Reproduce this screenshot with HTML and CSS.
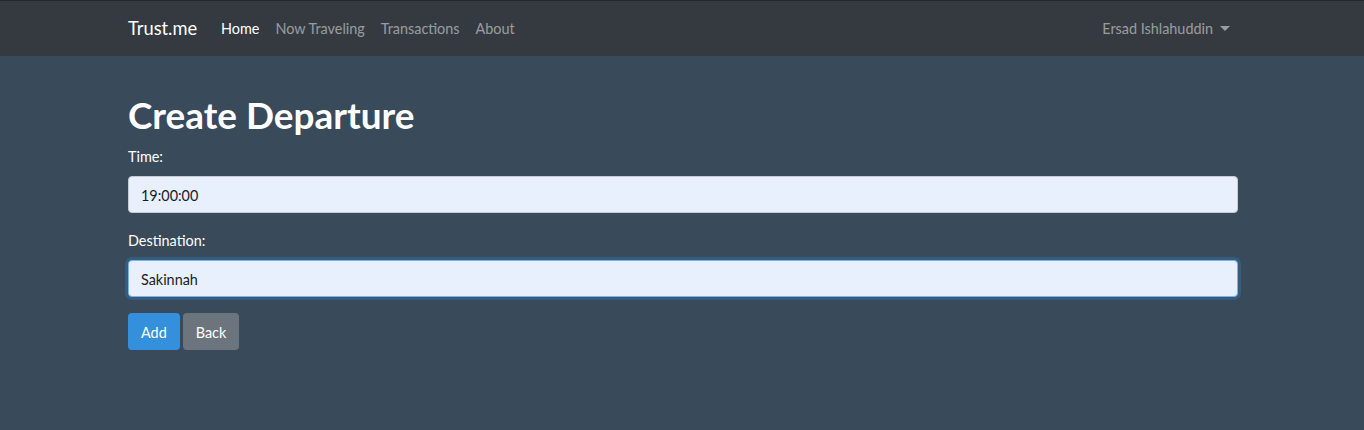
FILE: index.html
```html
<!DOCTYPE html>
<html lang="en">
<head>
<meta charset="utf-8">
<title>Create Departure</title>
<link rel="stylesheet" href="styles.css">
</head>
<body>
<nav class="navbar">
  <div class="container nav-inner">
    <a class="brand" href="#">Trust.me</a>
    <ul class="nav-links">
      <li><a class="nav-link active" href="#">Home</a></li>
      <li><a class="nav-link" href="#">Now Traveling</a></li>
      <li><a class="nav-link" href="#">Transactions</a></li>
      <li><a class="nav-link" href="#">About</a></li>
    </ul>
    <div class="nav-right">
      <a class="nav-link dropdown" href="#">Ersad Ishlahuddin<span class="caret"></span></a>
    </div>
  </div>
</nav>
<main class="container main">
  <h1 class="title">Create Departure</h1>
  <form class="form">
    <div class="form-group">
      <label class="label" for="time">Time:</label>
      <input class="input" id="time" type="text" value="19:00:00">
    </div>
    <div class="form-group">
      <label class="label" for="dest">Destination:</label>
      <input class="input focused" id="dest" type="text" value="Sakinnah">
    </div>
    <div class="actions">
      <button class="btn btn-primary" type="button">Add</button>
      <button class="btn btn-secondary" type="button">Back</button>
    </div>
  </form>
</main>
</body>
</html>
```
FILE: styles.css
```css
* { box-sizing: border-box; }
html, body {
  margin: 0;
  padding: 0;
}
body {
  font-family: Lato, "Open Sans", "Liberation Sans", sans-serif;
  font-size: 14.4px;
  line-height: 1.5;
  background: #394a5a;
  color: #fff;
  height: 430px;
}
.container {
  width: 1110px;
  margin-left: calc(50% - 554px);
}
.navbar {
  background: #343a40;
  border-top: 1px solid #24272b;
  height: 56px;
}
.nav-inner {
  display: flex;
  align-items: center;
  height: 55px;
  padding-top: 1px;
}
.brand {
  color: #fff;
  text-decoration: none;
  font-size: 18.3px;
  margin-right: 16px;
  line-height: 1.5;
}
.nav-links {
  display: flex;
  list-style: none;
  margin: 0;
  padding: 0;
}
.nav-link {
  display: block;
  padding: 8px 8px;
  color: rgba(255,255,255,0.5);
  text-decoration: none;
  font-size: 14.4px;
}
.nav-link.active { color: #fff; }
.nav-right {
  margin-left: auto;
}
.dropdown {
  display: flex;
  align-items: center;
}
.caret {
  display: inline-block;
  width: 0;
  height: 0;
  margin-left: 7px;
  border-top: 5px solid rgba(255,255,255,0.5);
  border-left: 5px solid transparent;
  border-right: 5px solid transparent;
}
.main {
  padding-top: 37px;
}
.title {
  font-size: 36.9px;
  font-weight: 700;
  line-height: 1.2;
  margin: 0 0 8px;
}
.form-group {
  margin-bottom: 16px;
}
.label {
  display: block;
  line-height: 23px;
  margin-bottom: 8px;
  font-size: 14.4px;
}
.input {
  display: block;
  width: 100%;
  height: 37px;
  padding: 7px 12px 5px;
  font-family: inherit;
  font-size: 14.4px;
  color: #1b1b22;
  background: #e8f0fe;
  border: 1px solid #c6cbd2;
  border-radius: 4px;
  outline: none;
}
.input.focused {
  border-color: #7ab3e8;
  box-shadow: 0 0 0 3px rgba(52,144,220,0.28);
}
.actions {
  display: flex;
  gap: 3px;
}
.btn {
  height: 37px;
  padding: 7px 12px 5px;
  font-family: inherit;
  font-size: 14.4px;
  color: #fff;
  border: 1px solid transparent;
  border-radius: 4px;
  cursor: pointer;
}
.btn-primary { background: #3490dc; }
.btn-secondary { background: #6c757d; }
```
